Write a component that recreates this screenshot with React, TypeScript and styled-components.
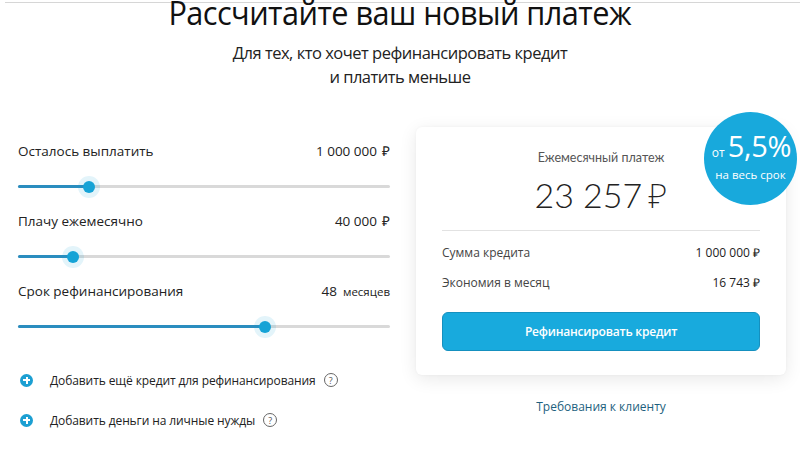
import React from "react";
import styled, { createGlobalStyle } from "styled-components";

const Global = createGlobalStyle`
  html, body { margin: 0; padding: 0; background: #ffffff; }
  body { width: 800px; height: 450px; overflow: hidden; font-family: "Open Sans", "Noto Sans", sans-serif; color: #222; }
`;

const Page = styled.div`
  width: 800px;
  height: 450px;
  overflow: hidden;
  display: flex;
  flex-direction: column;
`;

const TopRule = styled.div`
  margin: 2px 0 0 5px;
  height: 1px;
  background: #d6d6d6;
`;

const Header = styled.header`
  display: flex;
  flex-direction: column;
  align-items: center;
  margin-top: -8px;
`;

const Title = styled.h1`
  margin: 0;
  font-family: "Open Sans", sans-serif;
  font-weight: 400;
  font-size: 33px;
  line-height: 36px;
  letter-spacing: -0.6px;
  color: #111;
  transform: scaleX(0.93);
`;

const Subtitle = styled.p`
  margin: 10px 0 0;
  font-family: "Open Sans", sans-serif;
  font-size: 16.5px;
  line-height: 24px;
  text-align: center;
  color: #222;
  letter-spacing: -0.5px;
`;

const Main = styled.main`
  display: grid;
  grid-template-columns: 372px 370px;
  column-gap: 26px;
  padding-left: 18px;
  margin-top: 38px;
`;

const LeftCol = styled.section`
  display: flex;
  flex-direction: column;
  padding-top: 14px;
`;

const Field = styled.div`
  display: flex;
  flex-direction: column;
  height: 70px;
`;

const FieldHead = styled.div`
  display: flex;
  justify-content: space-between;
  align-items: baseline;
  height: 20px;
  line-height: 20px;
  font-family: "Open Sans", sans-serif;
  font-size: 13.5px;
  color: #222;
`;

const Unit = styled.span<{ $small?: boolean }>`
  font-size: ${(p) => (p.$small ? "11.5px" : "inherit")};
  margin-left: ${(p) => (p.$small ? "6px" : "5px")};
`;

const SliderBox = styled.div`
  position: relative;
  margin-top: 24px;
  height: 3px;
  background: #d9d9d9;
  border-radius: 2px;
`;

const SliderFill = styled.div`
  position: absolute;
  left: 0;
  top: 0;
  bottom: 0;
  background: #2a8dbf;
  border-radius: 2px;
`;

const Thumb = styled.div`
  position: absolute;
  top: 50%;
  width: 12px;
  height: 12px;
  margin: -6px 0 0 -6px;
  border-radius: 50%;
  background: #16a3d6;
  box-shadow: 0 0 0 5px rgba(22, 163, 214, 0.12);
`;

const AddList = styled.div`
  display: flex;
  flex-direction: column;
  gap: 20px;
  margin-top: 19px;
`;

const AddItem = styled.div`
  display: flex;
  align-items: center;
  height: 20px;
  padding-left: 2px;
  font-family: "Open Sans", sans-serif;
  font-size: 12px;
  letter-spacing: -0.1px;
  color: #222;
`;

const PlusIcon = styled.span`
  width: 13px;
  height: 13px;
  border-radius: 50%;
  background: #1c9fd2;
  position: relative;
  margin-right: 17px;
  flex: none;
  &::before, &::after {
    content: "";
    position: absolute;
    background: #fff;
    left: 50%;
    top: 50%;
  }
  &::before { width: 7px; height: 2px; margin: -1px 0 0 -3.5px; }
  &::after { width: 2px; height: 7px; margin: -3.5px 0 0 -1px; }
`;

const Help = styled.span`
  width: 12px;
  height: 12px;
  margin-left: 8px;
  border: 1px solid #666;
  border-radius: 50%;
  display: inline-flex;
  align-items: center;
  justify-content: center;
  font-size: 9px;
  line-height: 1;
  color: #555;
`;

const RightCol = styled.section`
  display: flex;
  flex-direction: column;
  align-items: stretch;
`;

const Card = styled.div`
  position: relative;
  background: #fff;
  border-radius: 6px;
  box-shadow: 0 4px 18px rgba(0, 0, 0, 0.09), 0 0 3px rgba(0, 0, 0, 0.04);
  padding: 22px 26px 24px;
  display: flex;
  flex-direction: column;
  font-family: Lato, "Open Sans", sans-serif;
`;

const Badge = styled.div`
  position: absolute;
  top: -15px;
  right: -11px;
  width: 93px;
  height: 93px;
  border-radius: 50%;
  background: #18a9dc;
  color: #fff;
  display: flex;
  flex-direction: column;
  align-items: center;
  justify-content: center;
  font-family: "Open Sans", sans-serif;
`;

const BadgeTop = styled.div`
  display: flex;
  align-items: baseline;
  line-height: 30px;
  margin-top: -4px;
  padding-left: 2px;
`;

const BadgeFrom = styled.span`
  font-size: 12px;
  margin-right: 3px;
`;

const BadgeRate = styled.span`
  font-size: 29px;
  letter-spacing: -0.3px;
`;

const BadgeNote = styled.span`
  font-size: 11.5px;
  line-height: 14px;
`;

const CardCaption = styled.div`
  text-align: center;
  font-size: 12.5px;
  line-height: 18px;
  color: #555;
`;

const Amount = styled.div`
  text-align: center;
  font-size: 34px;
  font-weight: 300;
  line-height: 40px;
  margin-top: 8px;
  color: #222;
`;

const Ruble = styled.span`
  font-family: "Noto Sans", "DejaVu Sans", sans-serif;
  font-weight: 200;
  margin-left: 6px;
`;

const Divider = styled.div`
  height: 1px;
  background: #e2e2e2;
  margin-top: 15px;
`;

const InfoRow = styled.div`
  display: flex;
  justify-content: space-between;
  align-items: center;
  height: 30px;
  font-family: "Open Sans", sans-serif;
  font-size: 12px;
  color: #444;
`;

const InfoRows = styled.div`
  display: flex;
  flex-direction: column;
  margin-top: 6px;
`;

const InfoValue = styled.span`
  color: #222;
`;

const CtaButton = styled.button`
  margin-top: 15px;
  height: 39px;
  border: 1px solid #1590bf;
  border-radius: 6px;
  background: #18aadd;
  color: #fff;
  font-family: "Open Sans", sans-serif;
  font-weight: 600;
  font-size: 12px;
  letter-spacing: -0.2px;
  cursor: pointer;
`;

const ReqLink = styled.a`
  margin-top: 23px;
  text-align: center;
  font-family: "Open Sans", sans-serif;
  font-size: 12px;
  color: #1d5f7e;
  text-decoration: none;
`;

type SliderProps = { value: number };

const Slider: React.FC<SliderProps> = ({ value }) => (
  <SliderBox>
    <SliderFill style={{ width: `${value}%` }} />
    <Thumb style={{ left: `${value}%` }} />
  </SliderBox>
);

const fields = [
  { label: "Осталось выплатить", value: "1 000 000", unit: "₽", small: false, pos: 19.2 },
  { label: "Плачу ежемесячно", value: "40 000", unit: "₽", small: false, pos: 14.8 },
  { label: "Срок рефинансирования", value: "48", unit: "месяцев", small: true, pos: 66.3 },
];

export default function App() {
  return (
    <Page>
      <Global />
      <TopRule />
      <Header>
        <Title>Рассчитайте ваш новый платеж</Title>
        <Subtitle>
          Для тех, кто хочет рефинансировать кредит
          <br />и платить меньше
        </Subtitle>
      </Header>
      <Main>
        <LeftCol>
          {fields.map((f) => (
            <Field key={f.label}>
              <FieldHead>
                <span>{f.label}</span>
                <span>
                  {f.value}
                  <Unit $small={f.small}>{f.unit}</Unit>
                </span>
              </FieldHead>
              <Slider value={f.pos} />
            </Field>
          ))}
          <AddList>
            <AddItem>
              <PlusIcon />
              Добавить ещё кредит для рефинансирования
              <Help>?</Help>
            </AddItem>
            <AddItem>
              <PlusIcon />
              Добавить деньги на личные нужды
              <Help>?</Help>
            </AddItem>
          </AddList>
        </LeftCol>
        <RightCol>
          <Card>
            <Badge>
              <BadgeTop>
                <BadgeFrom>от</BadgeFrom>
                <BadgeRate>5,5%</BadgeRate>
              </BadgeTop>
              <BadgeNote>на весь срок</BadgeNote>
            </Badge>
            <CardCaption>Ежемесячный платеж</CardCaption>
            <Amount>
              23 257<Ruble>₽</Ruble>
            </Amount>
            <Divider />
            <InfoRows>
              <InfoRow>
                <span>Сумма кредита</span>
                <InfoValue>1 000 000 ₽</InfoValue>
              </InfoRow>
              <InfoRow>
                <span>Экономия в месяц</span>
                <InfoValue>16 743 ₽</InfoValue>
              </InfoRow>
            </InfoRows>
            <CtaButton>Рефинансировать кредит</CtaButton>
          </Card>
          <ReqLink href="#">Требования к клиенту</ReqLink>
        </RightCol>
      </Main>
    </Page>
  );
}
